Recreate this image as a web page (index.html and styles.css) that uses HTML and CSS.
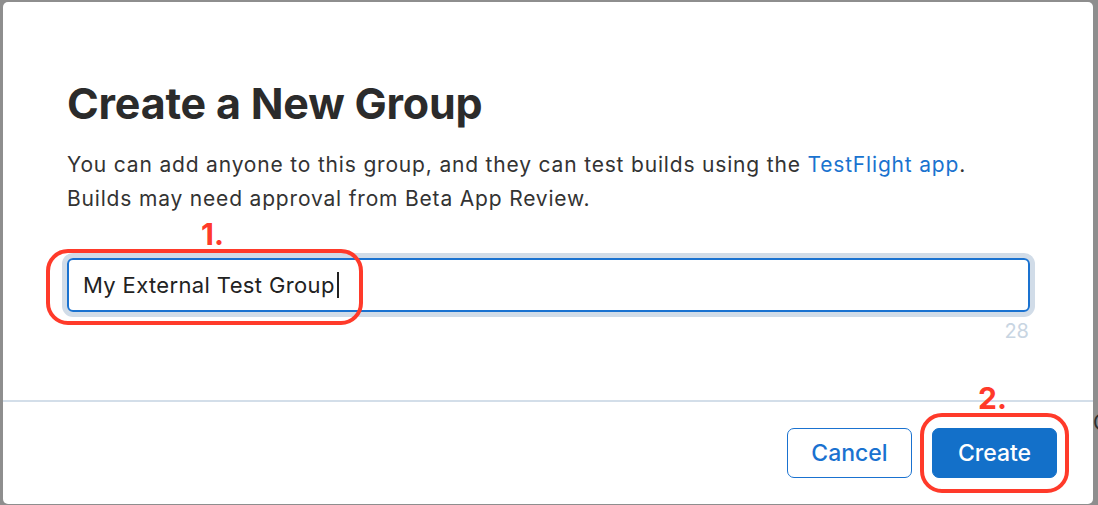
FILE: index.html
```html
<!DOCTYPE html>
<html lang="en">
<head>
<meta charset="utf-8">
<title>Create a New Group</title>
<link rel="stylesheet" href="styles.css">
</head>
<body>
  <span class="behind">C</span>
  <div class="modal">
    <div class="content">
      <h1 class="title">Create a New Group</h1>
      <p class="desc">You can add anyone to this group, and they can test builds using the <a class="link" href="#">TestFlight app</a>.<br>Builds may need approval from Beta App Review.</p>
      <div class="field">
        <span class="field-text">My External Test Group</span><span class="caret"></span>
      </div>
      <div class="counter">28</div>
    </div>
    <div class="footer">
      <button class="btn btn-secondary">Cancel</button>
      <button class="btn btn-primary">Create</button>
    </div>
    <div class="mark mark-field"></div>
    <div class="mark mark-create"></div>
    <span class="step step-1">1.</span>
    <span class="step step-2">2.</span>
  </div>
</body>
</html>
```

FILE: styles.css
```css
* { box-sizing: border-box; }

html, body {
  margin: 0;
  height: 100%;
}

body {
  background: #8e8e8e;
  padding: 2px 5px 1px 3px;
  overflow: hidden;
  position: relative;
  font-family: Inter, "Noto Sans", sans-serif;
}

.behind {
  position: absolute;
  left: 1093px;
  top: 410px;
  font-size: 21px;
  color: #2e2e2e;
}

.modal {
  position: relative;
  width: 1090px;
  height: 502px;
  background: #fff;
  border-radius: 5px;
  display: flex;
  flex-direction: column;
}

.content {
  flex: 1;
  padding: 75.6px 63px 0 64px;
}

.title {
  margin: 0;
  font-size: 43px;
  line-height: 51.6px;
  font-weight: 700;
  color: #2b2b2b;
  letter-spacing: -0.2px;
}

.desc {
  margin: 19px 0 0;
  font-size: 21px;
  line-height: 34px;
  letter-spacing: 0.82px;
  color: #333;
}

.link {
  color: #1a73cf;
  text-decoration: none;
}

.field {
  margin-top: 41.5px;
  height: 54px;
  border: 2px solid #1a72d0;
  border-radius: 6px;
  box-shadow: 0 0 0 5px #d1dce8;
  padding-left: 14px;
  display: flex;
  align-items: center;
  font-size: 22px;
  line-height: 50px;
  letter-spacing: 0.36px;
  color: #222;
}

.caret {
  display: inline-block;
  width: 2px;
  height: 26px;
  margin-left: 2px;
  background: #222;
}

.counter {
  margin-top: 7px;
  text-align: right;
  font-size: 20px;
  line-height: 25px;
  color: #c8d5e2;
  padding-right: 1px;
}

.footer {
  border-top: 2px solid #d3dee9;
  padding: 26px 36px 26px 0;
  display: flex;
  justify-content: flex-end;
  gap: 20px;
}

.btn {
  width: 125px;
  height: 50px;
  border-radius: 7px;
  font-family: Inter, "Noto Sans", sans-serif;
  font-size: 23px;
  font-weight: 500;
  padding: 0;
  cursor: pointer;
}

.btn-secondary {
  background: #fff;
  color: #1a72d0;
  border: 1.5px solid #1a72d0;
}

.btn-primary {
  background: #1370c9;
  color: #fff;
  border: 1.5px solid #1370c9;
}

.mark {
  position: absolute;
  border: 4px solid #ff3a2a;
  border-radius: 22px;
}

.mark-field {
  left: 43px;
  top: 247px;
  width: 317px;
  height: 76px;
}

.mark-create {
  left: 917px;
  top: 411px;
  width: 149px;
  height: 80px;
}

.step {
  position: absolute;
  font-size: 30px;
  line-height: 30px;
  font-weight: 700;
  color: #ff3a2a;
}

.step-1 {
  left: 198px;
  top: 217px;
}

.step-2 {
  left: 975px;
  top: 381px;
}
```
